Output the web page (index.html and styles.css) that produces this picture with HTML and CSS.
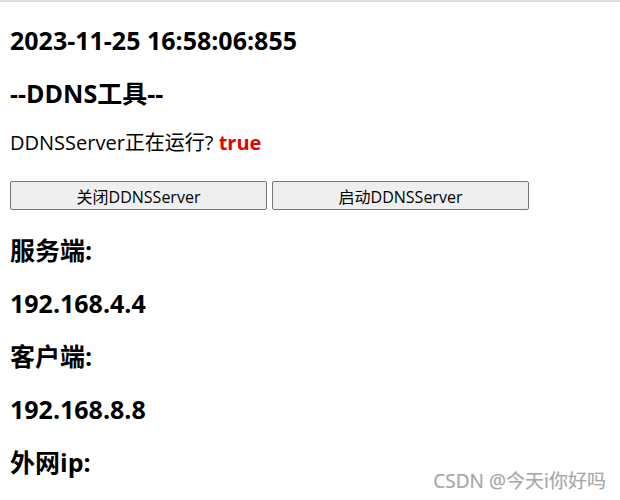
FILE: index.html
```html
<!DOCTYPE html>
<html lang="zh">
<head>
<meta charset="utf-8">
<title>DDNS工具</title>
<link rel="stylesheet" href="styles.css">
</head>
<body>
<div class="page">
  <h3 class="title">2023-11-25 16:58:06:855</h3>
  <h3 class="title">--DDNS工具--</h3>
  <p class="status">DDNSServer正在运行? <span class="flag">true</span></p>
  <div class="actions">
    <button class="btn">关闭DDNSServer</button>
    <button class="btn">启动DDNSServer</button>
  </div>
  <h3 class="title after-actions">服务端:</h3>
  <h3 class="title">192.168.4.4</h3>
  <h3 class="title">客户端:</h3>
  <h3 class="title">192.168.8.8</h3>
  <h3 class="title">外网ip:</h3>
</div>
<div class="watermark">CSDN @今天i你好吗</div>
</body>
</html>
```
FILE: styles.css
```css
html, body {
  margin: 0;
  padding: 0;
  background: #fff;
}
body {
  border-top: 2px solid #dcdcdc;
  height: 498px;
  overflow: hidden;
  position: relative;
  font-family: "Open Sans", "Noto Sans CJK SC", sans-serif;
  color: #000;
}
.page {
  padding: 0 10px;
  display: flex;
  flex-direction: column;
}
.title {
  font-size: 25px;
  font-weight: 700;
  line-height: 32px;
  margin: 0;
  padding: 21px 0 0;
}
.title:first-child {
  padding-top: 22px;
}
.title.after-actions {
  padding-top: 24px;
}
.status {
  font-size: 20px;
  line-height: 26px;
  margin: 21px 0 0;
}
.flag {
  color: #e60000;
  font-weight: 700;
}
.actions {
  display: flex;
  gap: 5px;
  margin-top: 25px;
}
.btn {
  width: 257px;
  height: 29px;
  font-family: "Open Sans", "Noto Sans CJK SC", sans-serif;
  font-size: 16px;
  color: #000;
  background: #efefef;
  border: 1px solid #767676;
  border-radius: 2px;
  padding: 0;
}
.watermark {
  position: absolute;
  right: 14px;
  bottom: 6px;
  font-family: "Noto Sans", "Noto Sans CJK SC", sans-serif;
  font-size: 19px;
  color: #a8a8a8;
  text-shadow: 0 0 1px #ddd;
}
```
